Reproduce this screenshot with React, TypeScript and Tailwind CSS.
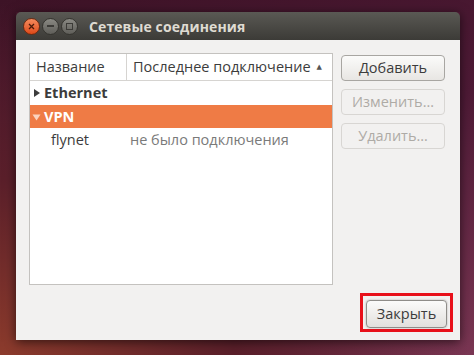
const font = { fontFamily: '"Open Sans", "Noto Sans", "DejaVu Sans", sans-serif' };

function TitleButton({ kind }: { kind: "close" | "min" | "max" }) {
  if (kind === "close") {
    return (
      <div className="w-[17px] h-[17px] rounded-full bg-gradient-to-b from-[#f58a5c] to-[#dd4814] border border-[#6b2a12] flex items-center justify-center">
        <svg width="7" height="7" viewBox="0 0 7 7">
          <path d="M1 1L6 6M6 1L1 6" stroke="#4a1a0a" strokeWidth="1.3" />
        </svg>
      </div>
    );
  }
  return (
    <div className="w-[17px] h-[17px] rounded-full bg-gradient-to-b from-[#8a8983] to-[#5f5e59] border border-[#35342f] flex items-center justify-center">
      {kind === "min" ? (
        <div className="w-[7px] h-[2px] bg-[#3c3b37]" />
      ) : (
        <div className="w-[7px] h-[7px] border border-[#3c3b37]" />
      )}
    </div>
  );
}

function SideButton({ label, disabled }: { label: string; disabled?: boolean }) {
  return (
    <button
      className={`h-[26px] w-full rounded-[4px] border text-[14.5px] flex items-center justify-center ${
        disabled
          ? "border-[#d8d6d3] bg-[#f2f1f0] text-[#aeaba6]"
          : "border-[#a8a6a2] bg-gradient-to-b from-[#fbfbfa] to-[#e8e6e3] text-[#3c3c3c]"
      }`}
    >
      {label}
    </button>
  );
}

export default function App() {
  return (
    <div
      className="w-[474px] h-[355px] overflow-hidden pl-[16px] pt-[12px] bg-[radial-gradient(ellipse_at_0%_100%,#8c3b2c_0%,#5a1f2a_35%,transparent_70%),linear-gradient(160deg,#3d1326_0%,#4e1a36_50%,#7a3653_100%)]"
      style={font}
    >
      <div className="w-[444px] h-[328px] flex flex-col shadow-[0_2px_10px_rgba(0,0,0,0.6)]">
        <div className="h-[28px] rounded-t-[5px] bg-gradient-to-b from-[#5a5954] to-[#3c3b37] flex items-center pl-[7px]">
          <div className="flex items-center gap-[2px]">
            <TitleButton kind="close" />
            <TitleButton kind="min" />
            <TitleButton kind="max" />
          </div>
          <span className="ml-[11px] text-[14px] font-bold text-[#dfdbd2] tracking-[0.1px]">
            Сетевые соединения
          </span>
        </div>
        <div className="flex-1 bg-[#f2f1f0] flex flex-col pl-[13px] pr-[15px] pt-[13px]">
          <div className="flex gap-[8px]">
            <div className="w-[304px] h-[232px] bg-white border border-[#c4c2bf] flex flex-col text-[14.5px]">
              <div className="h-[27px] flex border-b border-[#d6d4d1] text-[#3c3c3c]">
                <div className="w-[97px] border-r border-[#d6d4d1] flex items-center pl-[6px]">
                  Название
                </div>
                <div className="flex-1 flex items-center pl-[6px]">
                  Последнее подключение
                  <span className="ml-[6px] text-[7px] text-[#555]">▲</span>
                </div>
              </div>
              <div className="h-[24px] flex items-center pl-[2px] text-[#3c3c3c]">
                <svg width="10" height="10" viewBox="0 0 10 10" className="mr-[2px]">
                  <path d="M2 1L8 5L2 9Z" fill="#3c3c3c" />
                </svg>
                <span className="font-bold">Ethernet</span>
              </div>
              <div className="h-[23px] flex items-center pl-[2px] bg-[#ef7b45] text-white">
                <svg width="10" height="10" viewBox="0 0 10 10" className="mr-[2px]">
                  <path d="M0.5 2.5L8.5 2.5L4.5 8.5Z" fill="#fbd3bf" />
                </svg>
                <span className="font-bold">VPN</span>
              </div>
              <div className="h-[24px] flex items-center">
                <span className="w-[100px] pl-[21px] text-[#3c3c3c]">flynet</span>
                <span className="text-[#7a7a7a]">не было подключения</span>
              </div>
            </div>
            <div className="w-[104px] flex flex-col pt-[2px] gap-[8px]">
              <SideButton label="Добавить" />
              <SideButton label="Изменить…" disabled />
              <SideButton label="Удалить…" disabled />
            </div>
          </div>
          <div className="flex justify-end mt-[8px] mr-[-8px]">
            <div className="border-[3px] border-[#e8101a] pl-[3px] pr-[3px] pt-[4px] pb-[1px]">
              <button className="h-[28px] w-[81px] rounded-[4px] border border-[#8f8d89] bg-gradient-to-b from-[#fbfbfa] to-[#e2e0dd] text-[14.5px] text-[#3c3c3c] shadow-[0_0_2px_rgba(0,0,0,0.3)]">
                Закрыть
              </button>
            </div>
          </div>
        </div>
      </div>
    </div>
  );
}
